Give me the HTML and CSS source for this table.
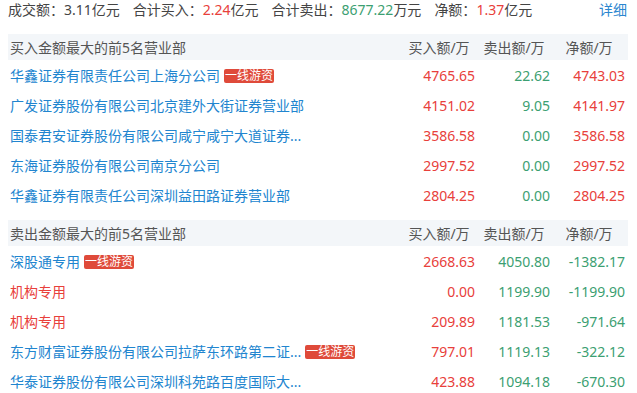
FILE: index.html
```html
<!DOCTYPE html>
<html lang="zh-CN">
<head>
<meta charset="utf-8">
<link rel="stylesheet" href="styles.css">
</head>
<body>
<div class="panel">
  <div class="summary">
    <span>成交额：3.11亿元</span>
    <span>合计买入：<em class="up">2.24</em>亿元</span>
    <span>合计卖出：<em class="down">8677.22</em>万元</span>
    <span>净额：<em class="up">1.37</em>亿元</span>
    <a class="more">详细</a>
  </div>

  <div class="table">
    <div class="row head">
      <div class="name">买入金额最大的前5名营业部</div>
      <div class="col">买入额/万</div>
      <div class="col">卖出额/万</div>
      <div class="col">净额/万</div>
    </div>
    <div class="row">
      <div class="name"><span class="link">华鑫证券有限责任公司上海分公司</span><span class="tag">一线游资</span></div>
      <div class="num up">4765.65</div><div class="num down">22.62</div><div class="num up">4743.03</div>
    </div>
    <div class="row">
      <div class="name"><span class="link">广发证券股份有限公司北京建外大街证券营业部</span></div>
      <div class="num up">4151.02</div><div class="num down">9.05</div><div class="num up">4141.97</div>
    </div>
    <div class="row">
      <div class="name"><span class="link">国泰君安证券股份有限公司咸宁咸宁大道证券...</span></div>
      <div class="num up">3586.58</div><div class="num down">0.00</div><div class="num up">3586.58</div>
    </div>
    <div class="row">
      <div class="name"><span class="link">东海证券股份有限公司南京分公司</span></div>
      <div class="num up">2997.52</div><div class="num down">0.00</div><div class="num up">2997.52</div>
    </div>
    <div class="row">
      <div class="name"><span class="link">华鑫证券有限责任公司深圳益田路证券营业部</span></div>
      <div class="num up">2804.25</div><div class="num down">0.00</div><div class="num up">2804.25</div>
    </div>
  </div>

  <div class="table">
    <div class="row head">
      <div class="name">卖出金额最大的前5名营业部</div>
      <div class="col">买入额/万</div>
      <div class="col">卖出额/万</div>
      <div class="col">净额/万</div>
    </div>
    <div class="row">
      <div class="name"><span class="link">深股通专用</span><span class="tag">一线游资</span></div>
      <div class="num up">2668.63</div><div class="num down">4050.80</div><div class="num down">-1382.17</div>
    </div>
    <div class="row">
      <div class="name"><span class="inst">机构专用</span></div>
      <div class="num up">0.00</div><div class="num down">1199.90</div><div class="num down">-1199.90</div>
    </div>
    <div class="row">
      <div class="name"><span class="inst">机构专用</span></div>
      <div class="num up">209.89</div><div class="num down">1181.53</div><div class="num down">-971.64</div>
    </div>
    <div class="row">
      <div class="name"><span class="link">东方财富证券股份有限公司拉萨东环路第二证...</span><span class="tag">一线游资</span></div>
      <div class="num up">797.01</div><div class="num down">1119.13</div><div class="num down">-322.12</div>
    </div>
    <div class="row">
      <div class="name"><span class="link">华泰证券股份有限公司深圳科苑路百度国际大...</span></div>
      <div class="num up">423.88</div><div class="num down">1094.18</div><div class="num down">-670.30</div>
    </div>
  </div>
</div>
</body>
</html>
```

FILE: styles.css
```css
html, body {
  margin: 0;
  padding: 0;
  background: #ffffff;
}

body {
  font-family: "Noto Sans", "Noto Sans CJK SC", sans-serif;
  font-size: 14px;
  color: #444444;
}

.panel {
  width: 620px;
  padding: 0 9px 0 8px;
}

em {
  font-style: normal;
}

.up {
  color: #e8403b;
}

.down {
  color: #3c9f72;
}

.summary {
  display: flex;
  gap: 13px;
  height: 20px;
  line-height: 20px;
  margin-bottom: 14px;
  color: #444444;
}

.summary .more {
  margin-left: auto;
  padding-right: 1px;
  color: #2a86cf;
  cursor: pointer;
}

.table + .table {
  margin-top: 10px;
}

.row {
  display: grid;
  grid-template-columns: 1fr 75px 75px 75px;
  height: 30px;
  align-items: center;
}

.row.head {
  height: 26px;
  background: #f3f6f9;
  color: #555555;
}

.name {
  display: flex;
  align-items: center;
  padding-left: 2px;
  white-space: nowrap;
  overflow: hidden;
}

.col {
  text-align: center;
  padding-right: 3px;
}

.num {
  text-align: right;
  padding-right: 3px;
}

.link {
  color: #2185cf;
}

.inst {
  color: #e8403b;
}

.tag {
  margin-left: 4px;
  padding: 0 1px;
  height: 14px;
  line-height: 14px;
  font-size: 12px;
  color: #ffffff;
  background: #df4a3a;
  border-radius: 2px;
  margin-top: 2px;
}
```
